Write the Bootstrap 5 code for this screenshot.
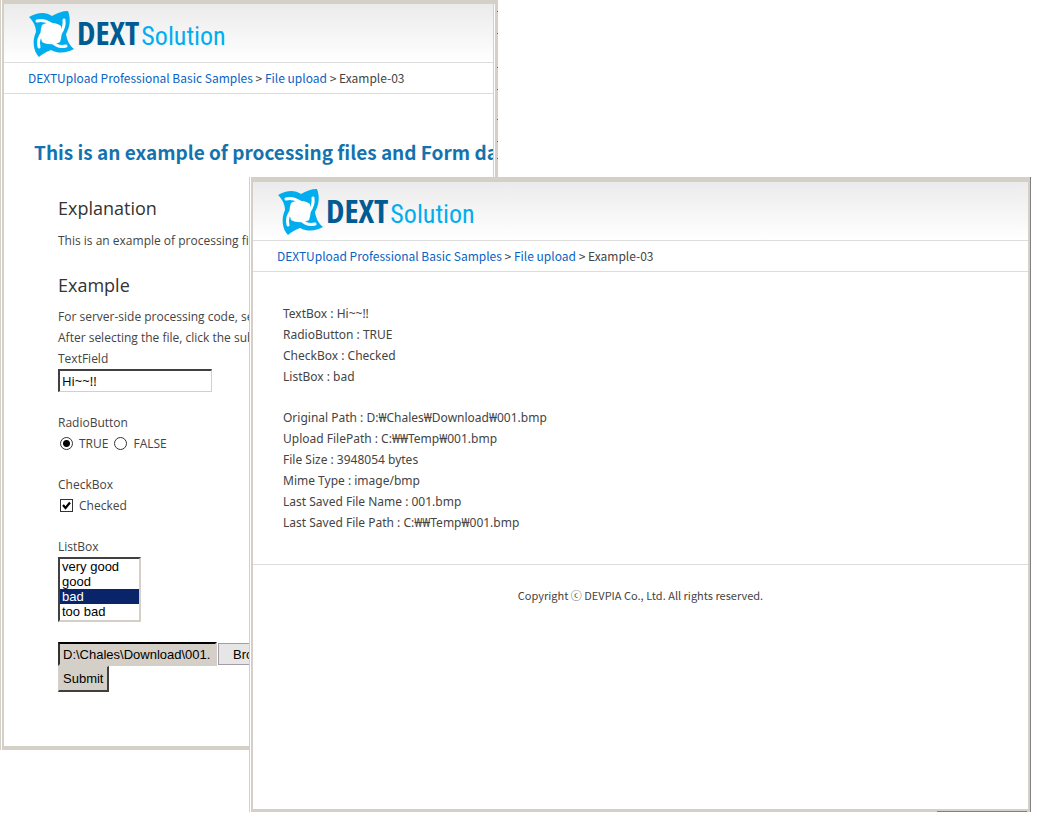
<!DOCTYPE html>
<html lang="en">
<head>
<meta charset="utf-8">
<meta name="viewport" content="width=device-width, initial-scale=1">
<title>DEXTUpload Professional - Example-03</title>
<link href="https://cdn.jsdelivr.net/npm/bootstrap@5.3.0/dist/css/bootstrap.min.css" rel="stylesheet">
<script src="https://cdn.jsdelivr.net/npm/bootstrap@5.3.0/dist/js/bootstrap.bundle.min.js" defer></script>
<style>
  body { font: 12px/21px "Open Sans", "Noto Sans CJK KR", sans-serif; color: #444; background: #fff; }
  a { color: #0a63c4; text-decoration: none; }
  .desktop { min-height: 820px; }
  .win { border: 0 solid #d4d0c8; background: #fff; box-shadow: -1px 0 #fff, -2px 0 #d4d0c8; }
  .win-form { top: 0; left: 2px; width: 47.8%; border-width: 4px 3px 4px 2px; padding-right: 1px; }
  .win-form .pane { border-right: 1px solid #d4d0c8; }
  .win-result { top: 177px; left: 251px; right: 7px; border-width: 5px 2px 3px 2px; box-shadow: 1px 0 #808080, -1px 0 #fff, -2px 0 #d4d0c8; }
  .win-result::after { content: ""; position: absolute; right: 1px; bottom: -3px; width: 90px; height: 1px; background: #808080; }
  .edge-marks { top: -4px; right: -3px; }
  .masthead { height: 59px; padding-left: 20px; border-bottom: 1px solid #ddd; background: linear-gradient(#ebebeb, #fff); }
  .logo-mark { width: 53px; height: 54px; }
  .logo-word { font: 700 33px/36px "Open Sans Condensed", "Roboto Condensed", sans-serif; color: #005b93; }
  .logo-word span { font: 400 26px/32px "Roboto Condensed", "Liberation Sans Narrow", sans-serif; color: #00aeef; margin-left: 2px; }
  .crumbs { height: 31px; line-height: 30px; padding-left: 24px; border-bottom: 1px solid #ddd; }
  .kr { font-family: "Noto Sans CJK KR", sans-serif; }
  h1 { font-size: 19px; line-height: 24px; color: #1473ae; margin: 46px 0 0 30px; }
  h2 { font-size: 18px; line-height: 24px; font-weight: 400; color: #333; margin: 0; }
  .form-body { padding: 32px 0 54px 54px; }
  .note { margin: 10px 0 22px; }
  .note-tight { margin: 9px 0 0; }
  .row-gap { margin-bottom: 20px; }
  .ctl, .list, .path, .btn-classic { font: 13px/15px "Liberation Sans", sans-serif; color: #000; border-radius: 0; }
  .ctl { width: 154px; height: 23px; padding: 0 2px; border: 1px solid #d4d0c8; border-top: 2px solid #404040; border-left: 2px solid #404040; font-family: "Open Sans", sans-serif; }
  .tick { appearance: none; width: 13px; height: 13px; margin: 0 6px 0 2px; border: 1px solid #333; background: #fff; }
  .tick[type=radio] { border-radius: 50%; }
  .tick[type=radio]:checked { background: radial-gradient(circle, #000 3px, #fff 4px); }
  .tick[type=checkbox]:checked { background: #fff url("data:image/svg+xml,%3Csvg xmlns='http://www.w3.org/2000/svg' viewBox='0 0 11 11'%3E%3Cpath d='M2 5l2.500 3L9 2.500' fill='none' stroke='%23000' stroke-width='2.200'/%3E%3C/svg%3E"); }
  .list { width: 83px; height: 65px; padding: 0; border: 2px solid #d4d0c8; border-top-color: #404040; border-left-color: #404040; overflow: hidden; background: #fff; outline: 0; }
  .list option { min-height: 15px; padding: 0 2px; }
  .list option:checked { background: #0a246a linear-gradient(#0a246a, #0a246a); color: #fff; }
  .path { width: 159px; height: 24px; padding: 0 3px; border: 2px solid #d4d0c8; border-top-color: #000; border-left-color: #333; background: #d4d0c8; }
  .btn-classic { height: 26px; padding: 0 4px; border: 1px solid #404040; border-width: 1px 2px 2px 1px; border-top-color: #d4d0c8; border-left-color: #d4d0c8; background: #d4d0c8; }
  .btn-browse { height: 22px; padding: 0 14px; margin-left: 1px; border: 1px solid #a59aa8; background: #e6e6e6; }
  .result-body { padding: 31px 30px; font-family: "Noto Sans", "Noto Sans CJK KR", sans-serif; }
  .site-foot { padding: 20px 0 203px; border-top: 1px solid #ddd; font-size: 11px; }
</style>
</head>
<body>
<svg class="d-none">
  <symbol id="swirl" viewBox="0 0 56 54">
    <path fill="#00aeef" d="M5 11C14 6 22 6 28 10C33 7 38 5 44 5C47 13 46 21 42 28C43 34 45 39 50 43C43 47 35 48 27 44C22 46 18 48 15 51C9 45 8 34 12 26C12 20 9 15 5 11Z"/>
    <path fill="#fff" d="M18 19C23 16 31 16 37 20C38 25 38 31 36 36C31 39 23 39 18 36C16 31 16 24 18 19Z"/>
    <g fill="none" stroke="#fff" stroke-linecap="round" stroke-width="3">
      <path d="M13 15Q20 13 27 18"/><path d="M40 14Q41 21 36 28"/><path d="M42 40Q34 42 28 36"/><path d="M15 41Q13 33 19 26"/>
    </g>
  </symbol>
</svg>
<main class="desktop position-relative overflow-hidden">
  <section class="win win-form position-absolute">
    <div class="pane overflow-hidden">
      <header class="masthead d-flex align-items-center">
        <svg class="logo-mark flex-shrink-0" viewBox="0 0 53 54" aria-hidden="true"><use href="#swirl" width="56" height="54"/></svg>
        <div class="logo-word text-nowrap">DEXT<span>Solution</span></div>
      </header>
      <nav class="crumbs kr text-nowrap" aria-label="Breadcrumb"><a href="#">DEXTUpload Professional Basic Samples</a> &gt; <a href="#">File upload</a> &gt; Example-03</nav>
      <h1 class="kr fw-bold text-nowrap">This is an example of processing files and Form data</h1>
      <form class="form-body">
        <h2>Explanation</h2>
        <p class="note text-nowrap">This is an example of processing files</p>
        <h2>Example</h2>
        <p class="note-tight text-nowrap">For server-side processing code, see the<br>After selecting the file, click the submit</p>
        <div class="row-gap"><label class="d-block" for="tf">TextField</label><input class="ctl d-block" id="tf" type="text" value="Hi~~!!"></div>
        <div class="row-gap"><div>RadioButton</div>
          <div class="d-flex align-items-center"><input class="tick" type="radio" name="r" id="r1" checked><label for="r1" class="me-1">TRUE</label><input class="tick" type="radio" name="r" id="r2"><label for="r2">FALSE</label></div></div>
        <div class="row-gap"><div>CheckBox</div>
          <div class="d-flex align-items-center"><input class="tick" type="checkbox" id="c1" checked><label for="c1">Checked</label></div></div>
        <div class="row-gap"><label class="d-block" for="lb">ListBox</label>
          <select class="list d-block" id="lb" size="4"><option>very good</option><option>good</option><option selected>bad</option><option>too bad</option></select></div>
        <div class="d-flex align-items-center"><input class="path" type="text" aria-label="File" value="D:\Chales\Download\001." readonly><button class="btn-classic btn-browse" type="button">Browse...</button></div>
        <button class="btn-classic d-block" type="submit">Submit</button>
      </form>
    </div>
    <svg class="edge-marks position-absolute" width="1" height="170" aria-hidden="true"><path fill="#666" d="M0 11h1v1H0zM0 33h1v1H0zM0 67h1v1H0zM0 89h1v1H0zM0 119h1v1H0zM0 141h1v1H0zM0 158h1v1H0z"/></svg>
  </section>
  <section class="win win-result position-absolute">
    <header class="masthead d-flex align-items-center">
      <svg class="logo-mark flex-shrink-0" viewBox="0 0 53 54" aria-hidden="true"><use href="#swirl" width="56" height="54"/></svg>
      <div class="logo-word text-nowrap">DEXT<span>Solution</span></div>
    </header>
    <nav class="crumbs kr text-nowrap" aria-label="Breadcrumb"><a href="#">DEXTUpload Professional Basic Samples</a> &gt; <a href="#">File upload</a> &gt; Example-03</nav>
    <div class="result-body">
      <div class="row-gap">TextBox : Hi~~!!<br>RadioButton : TRUE<br>CheckBox : Checked<br>ListBox : bad</div>
      <div>Original Path : D:₩Chales₩Download₩001.bmp<br>Upload FilePath : C:₩₩Temp₩001.bmp<br>File Size : 3948054 bytes<br>Mime Type : image/bmp<br>Last Saved File Name : 001.bmp<br>Last Saved File Path : C:₩₩Temp₩001.bmp</div>
    </div>
    <footer class="site-foot kr text-center">Copyright ⓒ DEVPIA Co., Ltd. All rights reserved.</footer>
  </section>
</main>
</body>
</html>
